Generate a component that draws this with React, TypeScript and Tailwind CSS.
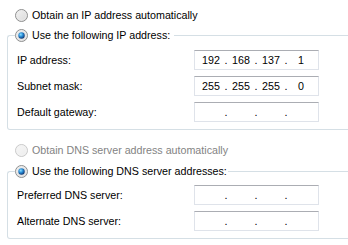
function Radio({ checked, disabled }: { checked?: boolean; disabled?: boolean }) {
  const id = checked ? "rc" : disabled ? "rd" : "ru";
  return (
    <svg width="13" height="13" viewBox="0 0 13 13" className="shrink-0">
      <defs>
        <linearGradient id={id + "f"} x1="0" y1="0" x2="1" y2="1">
          <stop offset="0" stopColor={disabled ? "#f7f7f7" : "#f4f4f4"} />
          <stop offset="1" stopColor={disabled ? "#ececec" : "#d9d9d9"} />
        </linearGradient>
        <radialGradient id={id + "d"} cx="0.38" cy="0.35" r="0.7">
          <stop offset="0" stopColor="#8fe0ff" />
          <stop offset="0.45" stopColor="#2b8fd8" />
          <stop offset="1" stopColor="#0c2f6a" />
        </radialGradient>
      </defs>
      <circle cx="6.5" cy="6.5" r="6" fill={`url(#${id}f)`} stroke={disabled ? "#c9c9c9" : "#8e8f8f"} />
      <circle cx="6.5" cy="6.5" r="4.6" fill="none" stroke={disabled ? "#f2f2f2" : "#e8e8e8"} strokeWidth="0.8" />
      {checked && <circle cx="6.5" cy="6.5" r="3.2" fill={`url(#${id}d)`} />}
    </svg>
  );
}

function IpBox({ parts }: { parts: string[] }) {
  return (
    <div className="w-[125px] h-[20px] border border-[#dfe3ea] border-t-[#abadb3] flex items-center pl-[2px] bg-white">
      {parts.map((p, i) => (
        <div key={i} className="flex">
          {i > 0 && <span className="w-[2px] flex justify-center">.</span>}
          <span className="w-[28px] text-center">{p}</span>
        </div>
      ))}
    </div>
  );
}

function Row({ label, parts }: { label: string; parts: string[] }) {
  return (
    <div className="flex h-[20px] items-center">
      <span className="w-[177px]">{label}</span>
      <IpBox parts={parts} />
    </div>
  );
}

// group box whose caption is a radio button, right edge runs off the window
function Group({ title, titleW, children, className }: { title: string; titleW: string; children: React.ReactNode; className?: string }) {
  return (
    <div className={"ml-[7px] w-[360px] " + (className ?? "")}>
      <div className="flex h-[14px]">
        <div className="w-[8px] mt-[7px] border-l border-t border-[#d5dfe5] rounded-tl-[3px]" />
        <div className={"flex items-center gap-[4px] whitespace-nowrap shrink-0 " + titleW}>
          <Radio checked />
          <span>{title}</span>
        </div>
        <div className="flex-1 mt-[7px] border-t border-r border-[#d5dfe5] rounded-tr-[3px]" />
      </div>
      <div className="border-l border-r border-b border-[#d5dfe5] rounded-b-[3px] pl-[9px] pb-[7px]">
        {children}
      </div>
    </div>
  );
}

export default function App() {
  return (
    <div className="w-[348px] h-[245px] overflow-hidden bg-white text-black text-[10.7px] font-['Liberation_Sans',Arial,sans-serif]">
      <div className="pt-[8px]">
        <div className="ml-[15px] h-[14px] flex items-center gap-[4px]">
          <Radio />
          <span>Obtain an IP address automatically</span>
        </div>
        <Group title="Use the following IP address:" titleW="w-[159px]" className="mt-[6px]">
          <div className="pt-[8px] flex flex-col gap-[6px]">
            <Row label="IP address:" parts={["192", "168", "137", "1"]} />
            <Row label="Subnet mask:" parts={["255", "255", "255", "0"]} />
            <Row label="Default gateway:" parts={["", "", "", ""]} />
          </div>
        </Group>
        <div className="mt-[13px] ml-[15px] h-[14px] flex items-center gap-[4px]">
          <Radio disabled />
          <span className="text-[#838383]">Obtain DNS server address automatically</span>
        </div>
        <Group title="Use the following DNS server addresses:" titleW="w-[213px]" className="mt-[7px]">
          <div className="pt-[7px] flex flex-col gap-[6px]">
            <Row label="Preferred DNS server:" parts={["", "", "", ""]} />
            <Row label="Alternate DNS server:" parts={["", "", "", ""]} />
          </div>
        </Group>
      </div>
    </div>
  );
}
